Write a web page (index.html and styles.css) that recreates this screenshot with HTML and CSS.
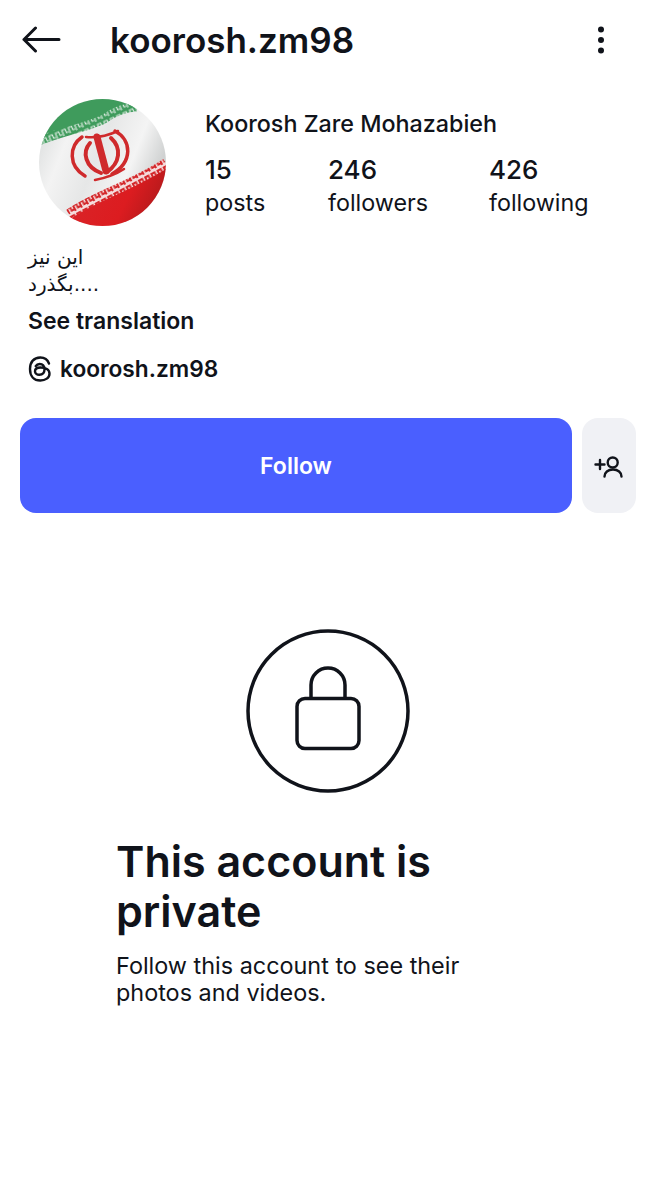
FILE: index.html
```html
<!DOCTYPE html>
<html lang="en">
<head>
  <meta charset="UTF-8" />
  <meta name="viewport" content="width=device-width, initial-scale=1.0"/>
  <title>koorosh.zm98</title>
  <link rel="stylesheet" href="styles.css">
</head>
<body>
  <header class="top-bar">
    <svg class="back-icon" width="40" height="28" viewBox="0 0 40 28" fill="none" stroke="#10131a" stroke-width="3" stroke-linecap="round" stroke-linejoin="round">
      <path d="M38 13.5H3M14.5 2 3 13.5 14.5 25"/>
    </svg>
    <h1 class="username">koorosh.zm98</h1>
    <svg class="more-icon" width="8" height="28" viewBox="0 0 8 28" fill="#10131a">
      <circle cx="4" cy="3.5" r="3"/>
      <circle cx="4" cy="14" r="3"/>
      <circle cx="4" cy="24.5" r="3"/>
    </svg>
  </header>

  <section class="profile">
    <svg class="avatar" width="127" height="127" viewBox="0 0 127 127">
      <defs>
        <clipPath id="avatar-clip"><circle cx="63.5" cy="63.5" r="63.5"/></clipPath>
        <linearGradient id="cloth" x1="0" y1="0" x2="1" y2="0.4">
          <stop offset="0" stop-color="#d3d6d6"/>
          <stop offset="0.3" stop-color="#f3f3f3"/>
          <stop offset="0.55" stop-color="#e6e7e7"/>
          <stop offset="0.8" stop-color="#f4f4f4"/>
          <stop offset="1" stop-color="#d0d2d2"/>
        </linearGradient>
        <linearGradient id="red-cloth" x1="0" y1="0" x2="1" y2="0.3">
          <stop offset="0" stop-color="#d9262a"/>
          <stop offset="0.7" stop-color="#dc1c20"/>
          <stop offset="1" stop-color="#b81a1c"/>
        </linearGradient>
        <pattern id="kufic-green" width="7" height="9" patternUnits="userSpaceOnUse" patternTransform="rotate(-24)">
          <rect width="7" height="9" fill="#3f9b5c"/>
          <path d="M1 8V2H4.500V6H7" fill="none" stroke="#dcebe0" stroke-width="1.200"/>
        </pattern>
        <pattern id="kufic-red" width="7" height="9" patternUnits="userSpaceOnUse" patternTransform="rotate(-28)">
          <rect width="7" height="9" fill="#f5dcdc"/>
          <path d="M1 8V2H4.500V6H7" fill="none" stroke="#d3282b" stroke-width="2"/>
        </pattern>
      </defs>
      <g clip-path="url(#avatar-clip)">
        <rect width="127" height="127" fill="url(#cloth)"/>
        <path d="M0 42C20 33 50 28 65 20 75 13 85 8 98 8V0H0Z" fill="#3f9b5c"/>
        <path d="M0 42C20 33 50 28 65 20 75 13 85 8 98 8" fill="none" stroke="url(#kufic-green)" stroke-width="9"/>
        <path d="M30 118C55 100 95 92 127 68V127H30Z" fill="url(#red-cloth)"/>
        <path d="M30 115C55 97 95 86 127 64" fill="none" stroke="url(#kufic-red)" stroke-width="10"/>
        <g fill="none" stroke="#cf2a2c" stroke-linecap="round">
          <path d="M47 38C56 39 68 37 79 32" stroke-width="2.500"/>
          <path d="M58 38 67 72" stroke-width="7"/>
          <path d="M43 38C30 47 29 67 46 77" stroke-width="3.500"/>
          <path d="M51 44C43 53 46 68 62 74" stroke-width="4"/>
          <path d="M76 32C93 41 94 63 73 75" stroke-width="3.500"/>
          <path d="M72 39C83 49 81 64 68 73" stroke-width="4"/>
          <path d="M56 81C66 79 76 76 85 70" stroke-width="2.500"/>
        </g>
      </g>
    </svg>
    <div class="profile-info">
      <div class="full-name">Koorosh Zare Mohazabieh</div>
      <div class="stats">
        <div class="stat stat-posts"><strong>15</strong><span>posts</span></div>
        <div class="stat stat-followers"><strong>246</strong><span>followers</span></div>
        <div class="stat"><strong>426</strong><span>following</span></div>
      </div>
    </div>
  </section>

  <section class="bio">
    <p class="bio-text">این نیز<br>بگذرد....</p>
    <p class="see-translation">See translation</p>
    <div class="threads-link">
      <svg width="24" height="26" viewBox="0 0 24 26" fill="none" stroke="#10131a" stroke-width="2.400" stroke-linecap="round">
        <path d="M21 7.500C19.600 3.500 16.600 1.500 12.300 1.500 5.800 1.500 2 6 2 13s3.800 11.500 10.300 11.500c5.200 0 9.200-2.800 9.200-6.800 0-4.200-4.100-6.200-9-6.200-3.500 0-5.500 1.500-5.500 3.700 0 2.100 1.900 3.500 4.300 3.500 3.200 0 5.200-2.200 5.200-5.500 0-3.200-1.900-5.200-4.700-5.200-1.900 0-3.300.8-4.100 2.100"/>
      </svg>
      <span>koorosh.zm98</span>
    </div>
  </section>

  <section class="actions">
    <button class="follow-btn">Follow</button>
    <button class="suggest-btn">
      <svg width="30" height="24" viewBox="0 0 30 24" fill="none" stroke="#10131a" stroke-width="2.400" stroke-linecap="round">
        <circle cx="18.700" cy="8.500" r="5"/>
        <path d="M10.500 22.500c0-4 3.500-7 8.500-7s8.500 3 8.500 7"/>
        <path d="M1.500 10.500h9M6 6v9"/>
      </svg>
    </button>
  </section>

  <section class="private">
    <svg class="lock" width="164" height="164" viewBox="0 0 164 164" fill="none" stroke="#10131a" stroke-width="3.500">
      <circle cx="82" cy="82" r="80"/>
      <path d="M65 69V56a17 17 0 0 1 34 0v13"/>
      <rect x="51" y="69.500" width="62" height="50" rx="8"/>
    </svg>
    <div class="private-copy">
      <h2>This account is private</h2>
      <p>Follow this account to see their photos and videos.</p>
    </div>
  </section>
</body>
</html>
```

FILE: styles.css
```css
body {
  font-family: Inter, "Noto Sans", sans-serif;
  margin: 0;
  background: #fff;
  color: #10131a;
}
.top-bar {
  display: flex;
  align-items: center;
  height: 80px;
  padding: 0 51px 0 21px;
}
.username {
  flex: 1;
  margin: 0 0 0 49px;
  font-size: 35px;
  font-weight: 600;
  line-height: 40px;
}
.profile {
  display: flex;
  align-items: flex-start;
  padding: 19px 0 0 39px;
}
.avatar {
  flex: none;
}
.profile-info {
  margin-left: 39px;
  padding-top: 10px;
}
.full-name {
  font-size: 23.3px;
  font-weight: 500;
  line-height: 30px;
}
.stats {
  display: flex;
  margin-top: 15px;
}
.stat {
  display: flex;
  flex-direction: column;
  width: 161px;
}
.stat-posts {
  width: 123px;
}
.stat strong {
  font-size: 26px;
  font-weight: 500;
  line-height: 32px;
}
.stat span {
  font-size: 23.3px;
  line-height: 33px;
}
.bio {
  padding: 18px 0 0 28px;
}
.bio-text {
  margin: 0;
  font-family: "DejaVu Sans", sans-serif;
  font-size: 20px;
  line-height: 27px;
  direction: ltr;
}
.see-translation {
  margin: 8px 0 0;
  font-size: 23px;
  font-weight: 600;
  line-height: 30px;
}
.threads-link {
  display: flex;
  align-items: center;
  gap: 8px;
  margin-top: 18px;
  font-size: 22.7px;
  font-weight: 600;
  line-height: 30px;
}
.actions {
  display: flex;
  gap: 10px;
  padding: 34px 20px 0;
}
.follow-btn,
.suggest-btn {
  display: flex;
  align-items: center;
  justify-content: center;
  height: 95px;
  border: 0;
  border-radius: 16px;
  font-family: inherit;
}
.follow-btn {
  flex: 1;
  background: #4a5fff;
  color: #fff;
  font-size: 23px;
  font-weight: 600;
}
.suggest-btn {
  width: 54px;
  padding: 0;
  background: #f0f1f5;
}
.private {
  display: flex;
  flex-direction: column;
  align-items: center;
  padding-top: 116px;
}
.private-copy {
  align-self: flex-start;
  width: 380px;
  margin: 43px 0 0 116px;
}
.private-copy h2 {
  margin: 0;
  font-size: 43px;
  font-weight: 600;
  line-height: 50px;
}
.private-copy p {
  margin: 16px 0 0;
  font-size: 23.4px;
  line-height: 27px;
}
```
